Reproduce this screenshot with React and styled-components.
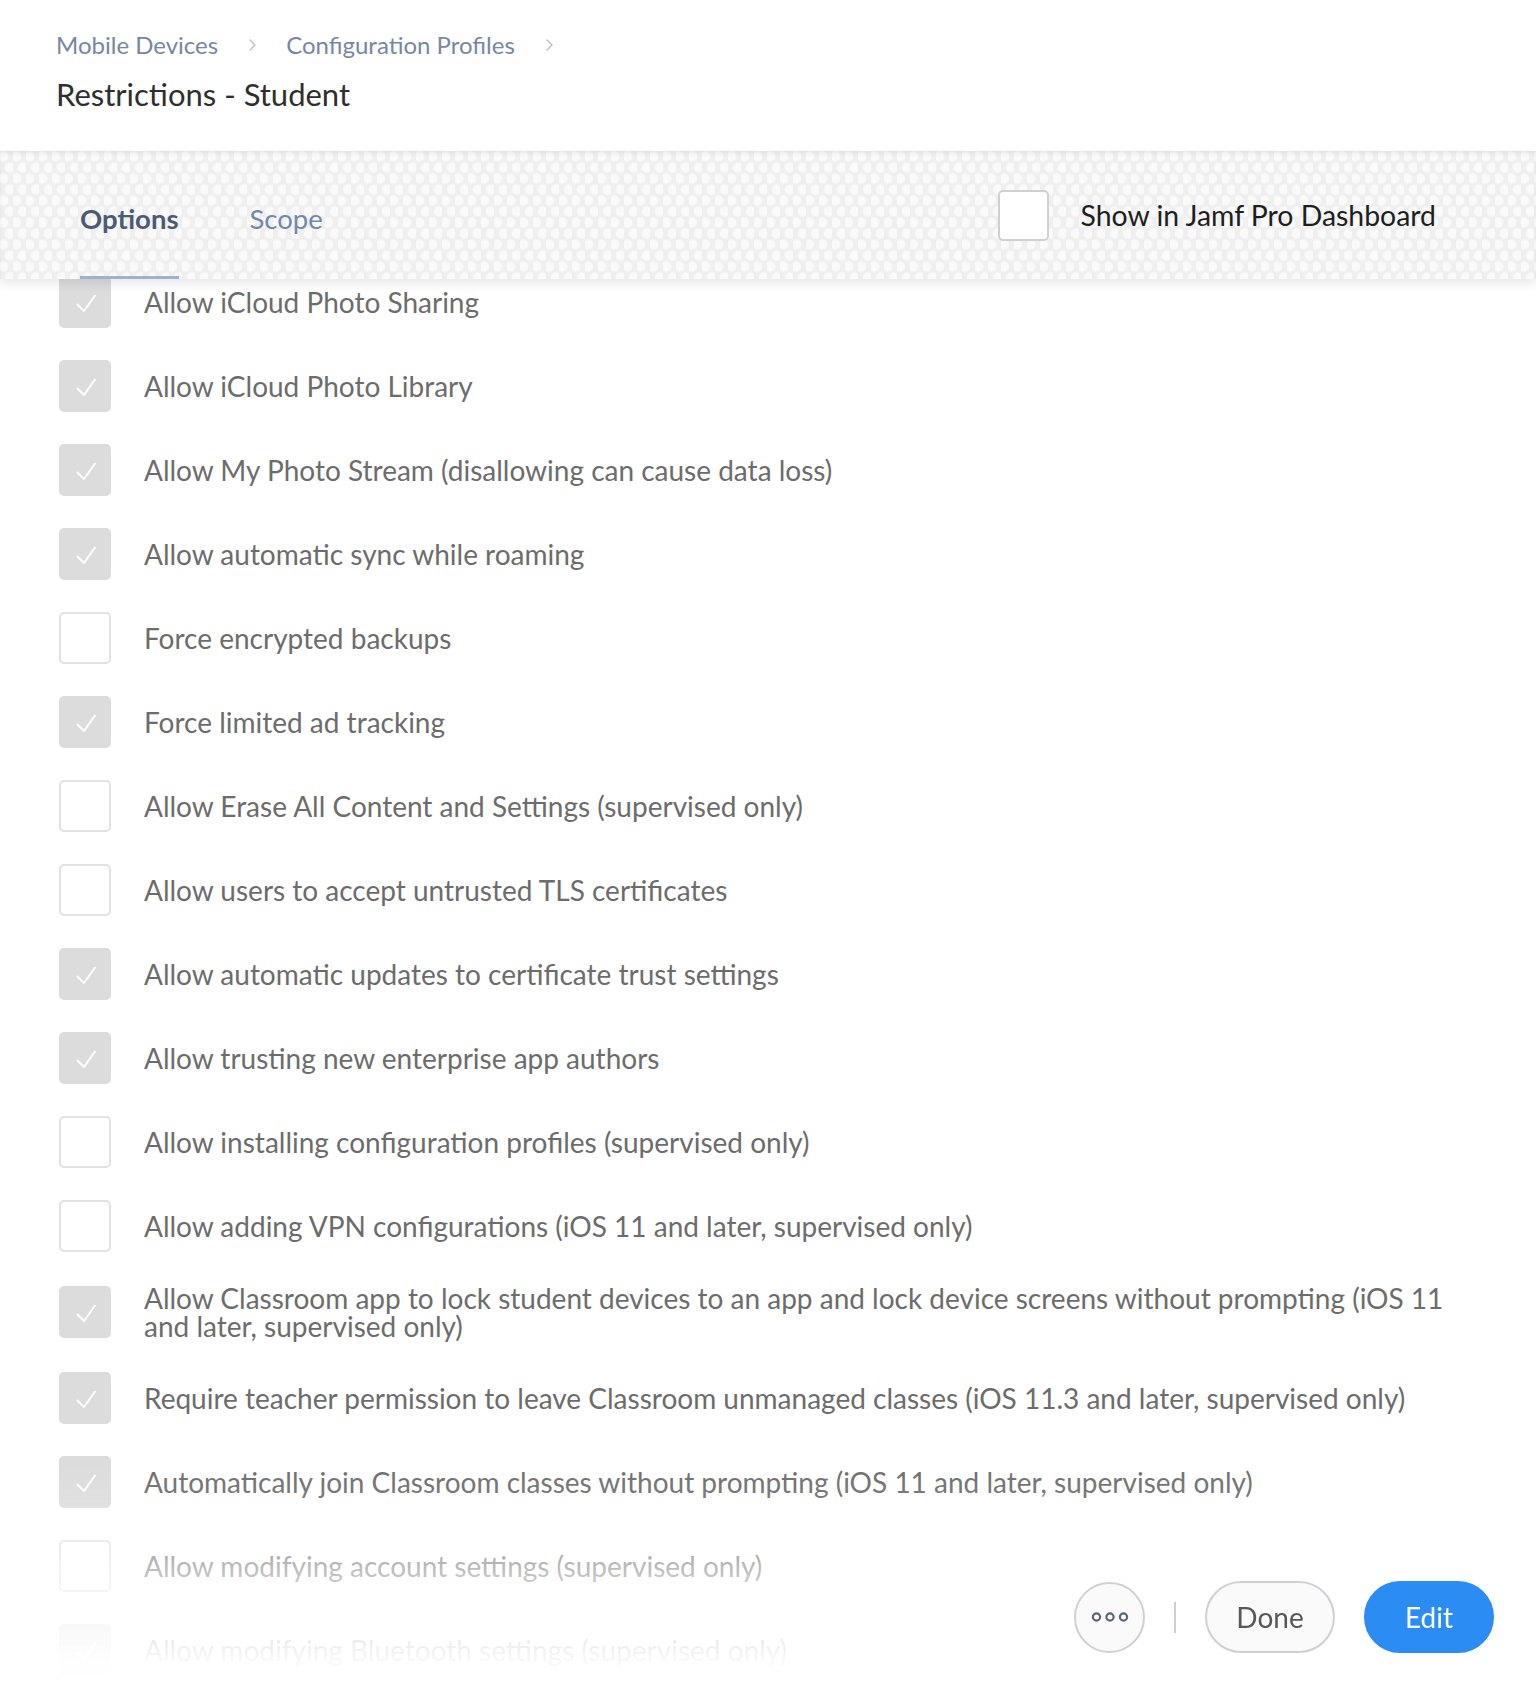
import React from 'react'
import styled, { createGlobalStyle } from 'styled-components'

const GlobalStyle = createGlobalStyle`
  html, body {
    margin: 0;
    padding: 0;
    background: #ffffff;
    overflow: hidden;
  }
  body {
    font-family: 'Lato', 'Noto Sans', sans-serif;
  }
`

const options = [
  { label: 'Allow iCloud Photo Sharing', checked: true },
  { label: 'Allow iCloud Photo Library', checked: true },
  { label: 'Allow My Photo Stream (disallowing can cause data loss)', checked: true },
  { label: 'Allow automatic sync while roaming', checked: true },
  { label: 'Force encrypted backups', checked: false },
  { label: 'Force limited ad tracking', checked: true },
  { label: 'Allow Erase All Content and Settings (supervised only)', checked: false },
  { label: 'Allow users to accept untrusted TLS certificates', checked: false },
  { label: 'Allow automatic updates to certificate trust settings', checked: true },
  { label: 'Allow trusting new enterprise app authors', checked: true },
  { label: 'Allow installing configuration profiles (supervised only)', checked: false },
  { label: 'Allow adding VPN configurations (iOS 11 and later, supervised only)', checked: false },
  {
    label:
      'Allow Classroom app to lock student devices to an app and lock device screens without prompting (iOS 11 and later, supervised only)',
    checked: true,
  },
  {
    label:
      'Require teacher permission to leave Classroom unmanaged classes (iOS 11.3 and later, supervised only)',
    checked: true,
  },
  {
    label: 'Automatically join Classroom classes without prompting (iOS 11 and later, supervised only)',
    checked: true,
  },
  { label: 'Allow modifying account settings (supervised only)', checked: false },
  { label: 'Allow modifying Bluetooth settings (supervised only)', checked: true },
]

const Check = () => (
  <svg width='28' height='28' viewBox='0 0 28 28' fill='none'>
    <path d='M6.5 16.5 L13 23 L24 7.5' stroke='#ffffff' strokeWidth='2' strokeLinecap='round' strokeLinejoin='round' />
  </svg>
)

const Chevron = () => (
  <svg width='10' height='14' viewBox='0 0 10 14' fill='none'>
    <path d='M3 2 L8 7 L3 12' stroke='#b9c0cc' strokeWidth='1.4' strokeLinecap='round' strokeLinejoin='round' />
  </svg>
)

const App = () => {
  return (
    <Page>
      <GlobalStyle />
      <Header>
        <Breadcrumbs>
          <Crumb>Mobile Devices</Crumb>
          <Chevron />
          <Crumb>Configuration Profiles</Crumb>
          <Chevron />
        </Breadcrumbs>
        <Title>Restrictions - Student</Title>
      </Header>

      <TabBar>
        <Tabs>
          <Tab $active>Options</Tab>
          <Tab>Scope</Tab>
        </Tabs>
        <Dashboard>
          <DashBox />
          <DashLabel>Show in Jamf Pro Dashboard</DashLabel>
        </Dashboard>
      </TabBar>

      <List>
        {options.map((o) => (
          <Row key={o.label}>
            <Box $checked={o.checked}>{o.checked && <Check />}</Box>
            <Label>{o.label}</Label>
          </Row>
        ))}
      </List>

      <Overlay>
        <Actions>
          <MoreButton>
            <svg width='38' height='12' viewBox='0 0 38 12' fill='none'>
              <circle cx='5.5' cy='6' r='3.6' stroke='#5b6579' strokeWidth='2.2' />
              <circle cx='19' cy='6' r='3.6' stroke='#5b6579' strokeWidth='2.2' />
              <circle cx='32.5' cy='6' r='3.6' stroke='#5b6579' strokeWidth='2.2' />
            </svg>
          </MoreButton>
          <Divider />
          <PillButton>Done</PillButton>
          <PillButton $primary>Edit</PillButton>
        </Actions>
      </Overlay>
    </Page>
  )
}

const Page = styled.div`
  min-height: 100vh;
  display: flex;
  flex-direction: column;
  background: #ffffff;
`

const Header = styled.header`
  padding: 30px 56px 39px;
  background: #ffffff;
`

const Breadcrumbs = styled.nav`
  display: flex;
  align-items: center;
  gap: 29px;
  height: 30px;
`

const Crumb = styled.span`
  font-size: 24px;
  line-height: 30px;
  color: #7687a3;
`

const Title = styled.h1`
  margin: 16px 0 0;
  font-size: 31px;
  line-height: 36px;
  font-weight: 400;
  color: #2e2e2e;
`

const TabBar = styled.div`
  position: relative;
  z-index: 2;
  height: 128px;
  box-sizing: border-box;
  display: flex;
  padding: 0 100px 0 80px;
  background-color: #efefef;
  background-image: radial-gradient(circle at 25% 25%, #fafafa 0, #fafafa 4px, transparent 6px),
    radial-gradient(circle at 75% 75%, #fafafa 0, #fafafa 4px, transparent 6px);
  background-size: 13px 22px;
  box-shadow: 0 5px 10px rgba(0, 0, 0, 0.09), inset 0 3px 4px rgba(0, 0, 0, 0.05);
`

const Tabs = styled.div`
  display: flex;
  align-items: flex-end;
  gap: 71px;
`

const Tab = styled.div`
  font-size: 27.5px;
  line-height: 30px;
  padding-bottom: 42px;
  border-bottom: 3px solid ${(p) => (p.$active ? '#9fb2cb' : 'transparent')};
  font-weight: ${(p) => (p.$active ? 700 : 400)};
  color: ${(p) => (p.$active ? '#4b5a76' : '#7189ab')};
`

const Dashboard = styled.label`
  margin-left: auto;
  align-self: center;
  display: flex;
  align-items: center;
  gap: 32px;
`

const DashBox = styled.span`
  width: 51px;
  height: 51px;
  box-sizing: border-box;
  border: 2px solid #d0d0d0;
  border-radius: 5px;
  background: #ffffff;
`

const DashLabel = styled.span`
  font-size: 28.4px;
  color: #1e1e1e;
`

const List = styled.ul`
  list-style: none;
  margin: -3px 0 0;
  padding: 0 88px 200px 59px;
  display: flex;
  flex-direction: column;
  gap: 32px;
`

const Row = styled.li`
  display: flex;
  align-items: center;
  gap: 33px;
  min-height: 52px;
`

const Box = styled.span`
  flex: none;
  width: 52px;
  height: 52px;
  box-sizing: border-box;
  border-radius: 5px;
  display: flex;
  align-items: center;
  justify-content: center;
  background: ${(p) => (p.$checked ? '#dcdcdc' : '#ffffff')};
  border: 2px solid ${(p) => (p.$checked ? '#dcdcdc' : '#e2e2e2')};
`

const Label = styled.span`
  font-size: 28px;
  line-height: 28px;
  color: #6c6c6c;
`

const Overlay = styled.div`
  position: fixed;
  left: 0;
  right: 0;
  bottom: 0;
  height: 240px;
  z-index: 3;
  display: flex;
  justify-content: flex-end;
  align-items: flex-end;
  padding: 0 42px 42px 0;
  box-sizing: border-box;
  background: linear-gradient(
    to bottom,
    rgba(255, 255, 255, 0) 0%,
    rgba(255, 255, 255, 0.15) 25%,
    rgba(255, 255, 255, 0.6) 50%,
    rgba(255, 255, 255, 0.95) 85%,
    #ffffff 100%
  );
`

const Actions = styled.div`
  display: flex;
  align-items: center;
  gap: 29px;
`

const MoreButton = styled.button`
  width: 71px;
  height: 71px;
  border-radius: 50%;
  border: 2px solid #cfd0d4;
  background: #fafafa;
  display: flex;
  align-items: center;
  justify-content: center;
  padding: 0;
`

const Divider = styled.span`
  width: 2px;
  height: 31px;
  background: #cfcfcf;
`

const PillButton = styled.button`
  width: 130px;
  height: 72px;
  border-radius: 36px;
  font-family: 'Lato', 'Noto Sans', sans-serif;
  font-size: 28px;
  padding: 0;
  border: 2px solid ${(p) => (p.$primary ? '#2b8cf3' : '#cfd0d4')};
  background: ${(p) => (p.$primary ? '#2b8cf3' : '#fafafa')};
  color: ${(p) => (p.$primary ? '#ffffff' : '#585858')};
`

export default App
